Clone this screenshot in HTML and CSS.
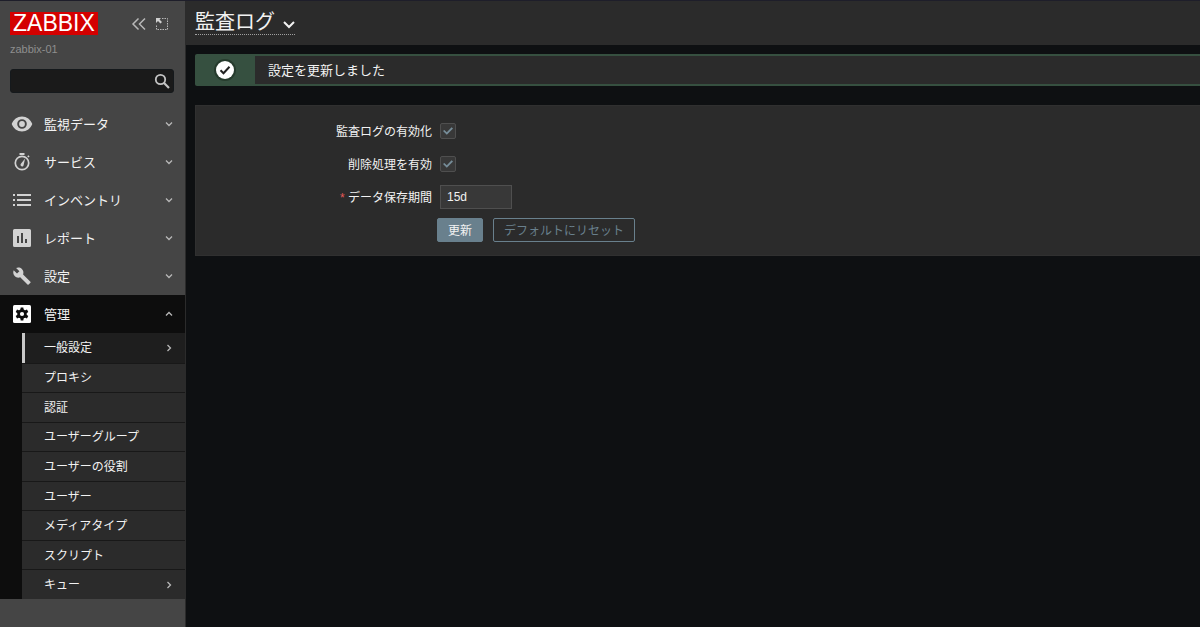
FILE: index.html
```html
<!DOCTYPE html>
<html lang="ja">
<head>
    <meta charset="UTF-8">
    <meta name="viewport" content="width=device-width, initial-scale=1.0">
    <title>監査ログ</title>
    <link rel="stylesheet" href="styles.css">
</head>
<body>
    <aside class="sidebar">
        <div class="sidebar-header">
            <a href="#" class="logo">ZABBIX</a>
            <div class="sidebar-tools">
                <button type="button" class="tool-button" aria-label="サイドバーを隠す">
                    <svg width="16" height="16" viewBox="0 0 16 16" fill="none" stroke="#b8b8b8" stroke-width="1.5"><path d="M7.5 2.5L2 8l5.500 5.500M14 2.500L8.500 8l5.500 5.500"/></svg>
                </button>
                <button type="button" class="tool-button" aria-label="サイドバーを折りたたむ">
                    <svg width="14" height="14" viewBox="0 0 14 14"><path d="M7 1.500h5.500v11h-11V8" fill="none" stroke="#b8b8b8" stroke-dasharray="1.500 1"/><path d="M1 1h5L4.500 2.500 7 5 5.500 6.500 3 4 1 6z" fill="#d0d0d0"/></svg>
                </button>
            </div>
        </div>
        <div class="server-name">zabbix-01</div>

        <form class="search" role="search">
            <input type="text" aria-label="検索">
            <button type="button" aria-label="検索">
                <svg width="16" height="16" viewBox="0 0 16 16" fill="none" stroke="#c4c4c4"><circle cx="6.500" cy="6.500" r="4.700" stroke-width="1.800"/><path d="M9.800 9.800L15 15" stroke-width="2.200"/></svg>
            </button>
        </form>

        <nav>
            <ul class="menu">
                <li>
                    <a href="#">
                        <svg class="icon" viewBox="0 0 22 22"><path d="M11 3.500C6.300 3.500 2.300 6.500.7 11c1.600 4.500 5.600 7.500 10.300 7.500s8.700-3 10.300-7.500C19.700 6.500 15.700 3.500 11 3.500zm0 12.300a4.800 4.800 0 1 1 0-9.600 4.800 4.800 0 0 1 0 9.600zm0-7.700a2.900 2.900 0 1 0 0 5.800 2.900 2.900 0 0 0 0-5.800z"/></svg>
                        <span>監視データ</span>
                        <svg class="arrow" viewBox="0 0 8 8"><path d="M1 2.500l3 3 3-3"/></svg>
                    </a>
                </li>
                <li>
                    <a href="#">
                        <svg class="icon" viewBox="0 0 22 22"><path d="M8.500 2h5v2h-5zM16.200 5.300l1.200-1.100 1.200 1.200-1.100 1.200zM10.100 12.600l4-5-1.400 6.200a1.600 1.600 0 1 1-2.600-1.200z"/><circle cx="11" cy="12" r="6.700" fill="none" stroke="currentColor" stroke-width="1.700"/></svg>
                        <span>サービス</span>
                        <svg class="arrow" viewBox="0 0 8 8"><path d="M1 2.500l3 3 3-3"/></svg>
                    </a>
                </li>
                <li>
                    <a href="#">
                        <svg class="icon" viewBox="0 0 22 22"><path d="M2 5h2v2H2zM6 5h14v2H6zM2 10h2v2H2zM6 10h14v2H6zM2 15h2v2H2zM6 15h14v2H6z"/></svg>
                        <span>インベントリ</span>
                        <svg class="arrow" viewBox="0 0 8 8"><path d="M1 2.500l3 3 3-3"/></svg>
                    </a>
                </li>
                <li>
                    <a href="#">
                        <svg class="icon" viewBox="0 0 22 22"><path fill-rule="evenodd" d="M3.500 2h15A1.500 1.500 0 0 1 20 3.500v15a1.500 1.500 0 0 1-1.500 1.500h-15A1.500 1.500 0 0 1 2 18.500v-15A1.500 1.500 0 0 1 3.500 2zM6 9v7h2V9zM10 6v10h2V6zM14 12v4h2v-4z"/></svg>
                        <span>レポート</span>
                        <svg class="arrow" viewBox="0 0 8 8"><path d="M1 2.500l3 3 3-3"/></svg>
                    </a>
                </li>
                <li>
                    <a href="#">
                        <svg class="icon" viewBox="0 0 22 22"><path d="M19.400 16.800l-7.300-7.300c.7-1.900.3-4-1.200-5.500C9.300 2.400 7 2.100 5.100 3l3.300 3.300L6 8.600 2.700 5.300c-.9 1.900-.5 4.200 1 5.800 1.500 1.500 3.600 1.900 5.500 1.200l7.300 7.300c.3.300.8.300 1.100 0l1.800-1.800c.4-.3.400-.8 0-1z"/></svg>
                        <span>設定</span>
                        <svg class="arrow" viewBox="0 0 8 8"><path d="M1 2.500l3 3 3-3"/></svg>
                    </a>
                </li>
                <li class="open">
                    <a href="#">
                        <svg class="icon" viewBox="0 0 22 22"><rect x="2" y="2" width="18" height="18" rx="1.500"/><g fill="#0d0d0d"><circle cx="11" cy="11" r="4.700"/><path id="cog" d="M9.700 4.500h2.600l.5 3h-3.600zM9.700 17.500h2.600l.5-3h-3.600z"/><use href="#cog" transform="rotate(60 11 11)"/><use href="#cog" transform="rotate(120 11 11)"/></g><circle cx="11" cy="11" r="2.100"/></svg>
                        <span>管理</span>
                        <svg class="arrow" viewBox="0 0 8 8"><path d="M1 5.500l3-3 3 3"/></svg>
                    </a>
                    <ul class="submenu">
                        <li class="selected"><a href="#"><span>一般設定</span><svg class="arrow" viewBox="0 0 8 8"><path d="M2.500 1l3 3-3 3"/></svg></a></li>
                        <li><a href="#"><span>プロキシ</span></a></li>
                        <li><a href="#"><span>認証</span></a></li>
                        <li><a href="#"><span>ユーザーグループ</span></a></li>
                        <li><a href="#"><span>ユーザーの役割</span></a></li>
                        <li><a href="#"><span>ユーザー</span></a></li>
                        <li><a href="#"><span>メディアタイプ</span></a></li>
                        <li><a href="#"><span>スクリプト</span></a></li>
                        <li><a href="#"><span>キュー</span><svg class="arrow" viewBox="0 0 8 8"><path d="M2.500 1l3 3-3 3"/></svg></a></li>
                    </ul>
                </li>
            </ul>
        </nav>
    </aside>

    <div class="content">
        <header class="page-header">
            <h1>
                <button type="button" class="title-button">
                    <span>監査ログ</span>
                    <svg width="12" height="12" viewBox="0 0 12 12" fill="none" stroke="currentColor" stroke-width="2"><path d="M1 4l5 5 5-5"/></svg>
                </button>
            </h1>
        </header>

        <main>
            <div class="message" role="status">
                <div class="message-icon">
                    <svg width="22" height="22" viewBox="0 0 22 22"><circle cx="11" cy="11" r="11" fill="#263b2d"/><circle cx="11" cy="11" r="9" fill="#fff"/><path d="M6.500 11.300l3 3 6-6.500" fill="none" stroke="#222" stroke-width="2"/></svg>
                </div>
                <p>設定を更新しました</p>
            </div>

            <form class="settings">
                <div class="form-row">
                    <label for="auditEnabled">監査ログの有効化</label>
                    <input type="checkbox" id="auditEnabled" checked>
                </div>
                <div class="form-row">
                    <label for="housekeeping">削除処理を有効</label>
                    <input type="checkbox" id="housekeeping" checked>
                </div>
                <div class="form-row">
                    <label for="storagePeriod" class="required">データ保存期間</label>
                    <input type="text" id="storagePeriod" value="15d">
                </div>
                <div class="form-actions">
                    <button type="button" class="btn">更新</button>
                    <button type="button" class="btn btn-alt">デフォルトにリセット</button>
                </div>
            </form>
        </main>
    </div>
</body>
</html>
```
FILE: styles.css
```css
* {
    box-sizing: border-box;
}

body {
    display: flex;
    min-height: 100vh;
    margin: 0;
    border-top: 1px solid #1e1e2a;
    background: #0e1012;
    color: #f2f2f2;
    font-family: "Liberation Sans", "Noto Sans CJK JP", sans-serif;
    font-size: 12px;
}

input, button {
    font: inherit;
    color: inherit;
}

button {
    padding: 0;
    border: none;
    background: none;
    cursor: pointer;
}

a {
    color: inherit;
    text-decoration: none;
}

ul {
    margin: 0;
    padding: 0;
    list-style: none;
}

svg {
    display: block;
    flex: none;
}

/* Sidebar */
.sidebar {
    flex: none;
    width: 186px;
    background: #454545;
    border-right: 1px solid #2b2b2b;
}

.sidebar-header {
    display: flex;
    justify-content: space-between;
    align-items: center;
    padding: 11px 16px 0 10px;
}

.logo {
    padding: 0 3px;
    background: #d40000;
    color: #fff;
    font-size: 23px;
    line-height: 23px;
}

.sidebar-tools {
    display: flex;
    align-items: center;
    gap: 8px;
}

.server-name {
    padding: 6px 10px 0;
    color: #8e8e8e;
    font-size: 11px;
    line-height: 16px;
}

.search {
    display: flex;
    align-items: center;
    height: 24px;
    margin: 12px 11px 12px 10px;
    padding-right: 3px;
    background: #1a1a1a;
    border: 1px solid #15191c;
    border-radius: 3px;
}

.search input {
    flex: 1;
    min-width: 0;
    border: none;
    outline: none;
    background: none;
}

.menu a {
    display: flex;
    align-items: center;
    height: 38px;
    padding: 0 12px 0 11px;
    font-size: 13px;
}

.menu span {
    flex: 1;
    padding-bottom: 2px;
}

.icon {
    width: 22px;
    height: 22px;
    margin-right: 11px;
    color: #d2d2d2;
    fill: currentColor;
}

.arrow {
    width: 8px;
    height: 8px;
    fill: none;
    stroke: #b8b8b8;
    stroke-width: 1.3;
}

.menu .open {
    background: #0d0d0d;
}

.open .icon {
    color: #fff;
}

.menu .submenu {
    display: grid;
    grid-auto-rows: 1fr;
    height: 266px;
    margin-left: 22px;
    background: #2b2b2b;
}

.submenu li + li {
    border-top: 1px solid #181818;
}

.submenu a {
    height: 100%;
    padding-left: 22px;
    font-size: 12px;
}

.submenu .selected {
    background: #1e1e1e;
}

.submenu .selected a {
    padding-left: 19px;
    border-left: 3px solid #c8c8c8;
}

/* Page */
.content {
    flex: 1;
    min-width: 0;
}

.page-header {
    height: 44px;
    padding: 9px 9px 0;
    background: #2b2b2b;
}

h1 {
    margin: 0;
    font-size: 20px;
    font-weight: normal;
    line-height: 24px;
}

.title-button {
    display: flex;
    align-items: center;
    gap: 8px;
    height: 25px;
    border-bottom: 1px dotted #a0a0a0;
}

.title-button svg {
    margin-top: 4px;
}

main {
    padding: 9px 0 10px 9px;
}

.message {
    display: flex;
    align-items: center;
    height: 32px;
    border: 2px solid #365040;
    border-left: none;
    border-right: none;
    border-radius: 2px 0 0 2px;
    background: #2b2b2b;
}

.message-icon {
    display: flex;
    align-items: center;
    justify-content: center;
    align-self: stretch;
    width: 60px;
    background: #365040;
}

.message p {
    margin: 0 13px;
    padding-bottom: 2px;
    font-size: 13px;
}

.settings {
    display: flex;
    flex-direction: column;
    gap: 9px;
    margin-top: 19px;
    padding: 13px 10px;
    border: 1px solid #303030;
    border-right: none;
    background: #2b2b2b;
}

.form-row {
    display: flex;
    align-items: center;
    gap: 8px;
    min-height: 24px;
}

.form-row label {
    width: 226px;
    padding-bottom: 2px;
    text-align: right;
}

.required::before {
    content: "* ";
    color: #e45959;
}

input[type="checkbox"] {
    appearance: none;
    display: grid;
    place-items: center;
    width: 16px;
    height: 16px;
    margin: 0;
    background: #383838;
    border: 1px solid #4f4f4f;
    border-radius: 2px;
}

input[type="checkbox"]:checked::before {
    content: "";
    width: 10px;
    height: 8px;
    background: #768d99;
    clip-path: polygon(0 50%, 13% 36%, 38% 66%, 86% 4%, 100% 18%, 38% 96%);
}

.settings input[type="text"] {
    width: 72px;
    height: 24px;
    padding: 0 6px;
    background: #383838;
    border: 1px solid #4f4f4f;
}

.form-actions {
    display: flex;
    gap: 10px;
    padding-left: 231px;
}

.btn {
    height: 24px;
    padding: 0 10px 2px;
    background: #69808d;
    border: 1px solid #69808d;
    border-radius: 2px;
}

.btn-alt {
    background: none;
    color: #69808d;
}
```
